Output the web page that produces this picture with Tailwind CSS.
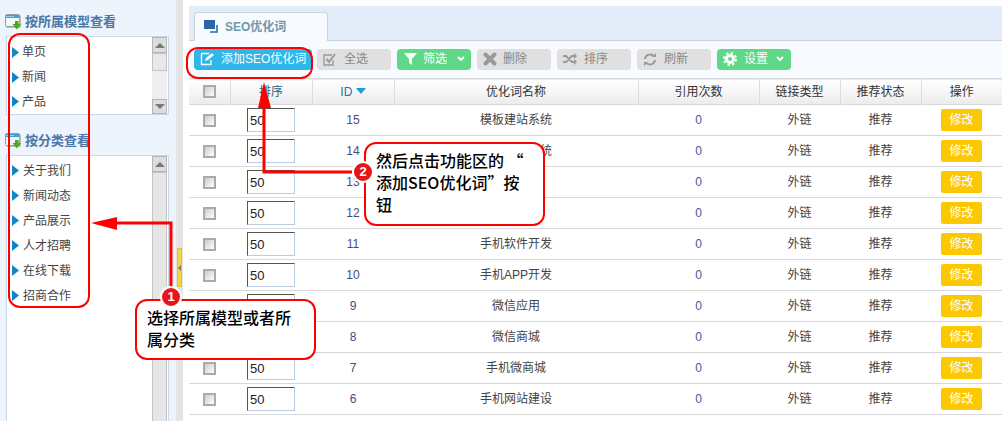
<!DOCTYPE html>
<html lang="zh-CN">
<head>
    <meta charset="UTF-8">
    <title>SEO优化词</title>
    <script src="https://cdn.jsdelivr.net/npm/@tailwindcss/browser@4"></script>
</head>
<body class="relative w-[1008px] h-[421px] overflow-hidden bg-white text-[12px] text-[#444] font-['Liberation_Sans','Noto_Sans_CJK_SC',sans-serif]">
    <svg width="0" height="0" class="absolute">
        <symbol id="tri" viewBox="0 0 7 11"><path d="M0 0 L7 5.5 L0 11 Z" fill="#0f85c6"/></symbol>
        <symbol id="winIcon" viewBox="0 0 16 16">
            <rect x="1.500" y="1.500" width="14" height="12" fill="#888"/>
            <rect x="0.500" y="0.500" width="14" height="12" rx="1" fill="#f4f8fb" stroke="#8aa0ac"/>
            <rect x="1" y="1" width="13" height="3" fill="#3f9fd6"/>
            <path d="M1.500 2.500h8" stroke="#fff" stroke-width="1" stroke-dasharray="1 1"/>
            <path d="M10 7h3.500v3H16l-4.200 5.500L7.500 10H10z" fill="#4aae12"/>
        </symbol>
    </svg>

    <div class="flex h-full">
        <!-- left tree -->
        <div class="w-[176px] h-full shrink-0 bg-[#eef4fc] pt-[1px]">
            <div class="flex items-center gap-[4px] h-[35px] pl-[5px] pt-[6px] font-bold text-[13px] text-[#4a76a8]">
                <svg class="w-[16px] h-[16px]"><use href="#winIcon"/></svg>
                <span>按所属模型查看</span>
            </div>
            <div class="relative ml-[6px] w-[163px] h-[79px] bg-white border border-[#c9d8e8] flex flex-col pl-[5px] pt-[3px]">
                <div class="flex items-center gap-[3px] h-[25px]"><svg class="w-[7px] h-[11px]"><use href="#tri"/></svg>单页</div>
                <div class="flex items-center gap-[3px] h-[25px]"><svg class="w-[7px] h-[11px]"><use href="#tri"/></svg>新闻</div>
                <div class="flex items-center gap-[3px] h-[25px]"><svg class="w-[7px] h-[11px]"><use href="#tri"/></svg>产品</div>
                <div class="absolute right-[1px] top-0 bottom-0 w-[15px] bg-[#eeeeee] flex flex-col">
                    <div class="h-[16px] bg-[#ddd] border border-[#b5b5b5] flex items-center justify-center"><div class="border-x-[5px] border-x-transparent border-b-[5px] border-b-[#777]"></div></div>
                    <div class="h-[18px] bg-[#e8e8e8] border border-[#c4c4c4]"></div>
                    <div class="flex-1"></div>
                    <div class="h-[15px] bg-[#ddd] border border-[#b5b5b5] flex items-center justify-center"><div class="border-x-[5px] border-x-transparent border-t-[5px] border-t-[#777]"></div></div>
                </div>
            </div>
            <div class="flex items-center gap-[4px] h-[40px] pl-[5px] pt-[11px] font-bold text-[13px] text-[#4a76a8]">
                <svg class="w-[16px] h-[16px]"><use href="#winIcon"/></svg>
                <span>按分类查看</span>
            </div>
            <div class="relative ml-[6px] w-[163px] h-[270px] bg-white border border-[#c9d8e8] flex flex-col pl-[5px] pt-[2px]">
                <div class="flex items-center gap-[4px] h-[25px]"><svg class="w-[7px] h-[11px]"><use href="#tri"/></svg>关于我们</div>
                <div class="flex items-center gap-[4px] h-[25px]"><svg class="w-[7px] h-[11px]"><use href="#tri"/></svg>新闻动态</div>
                <div class="flex items-center gap-[4px] h-[25px]"><svg class="w-[7px] h-[11px]"><use href="#tri"/></svg>产品展示</div>
                <div class="flex items-center gap-[4px] h-[25px]"><svg class="w-[7px] h-[11px]"><use href="#tri"/></svg>人才招聘</div>
                <div class="flex items-center gap-[4px] h-[25px]"><svg class="w-[7px] h-[11px]"><use href="#tri"/></svg>在线下载</div>
                <div class="flex items-center gap-[4px] h-[25px]"><svg class="w-[7px] h-[11px]"><use href="#tri"/></svg>招商合作</div>
                <div class="absolute right-[1px] top-0 bottom-0 w-[15px] bg-[#eeeeee] flex flex-col">
                    <div class="h-[16px] bg-[#ddd] border border-[#b5b5b5] flex items-center justify-center"><div class="border-x-[5px] border-x-transparent border-b-[5px] border-b-[#777]"></div></div>
                    <div class="flex-1 bg-[#e6e6e6] border border-[#c4c4c4]"></div>
                </div>
            </div>
        </div>

        <!-- splitter -->
        <div class="w-[7px] h-full shrink-0 bg-[#e4e4e4] flex flex-col items-center pt-[248px]">
            <div class="w-[5px] h-[39px] bg-[#f5d63d] border border-[#d8c34a] flex items-center justify-center">
                <div class="border-y-[3px] border-y-transparent border-r-[3px] border-r-[#777]"></div>
            </div>
        </div>

        <!-- main -->
        <div class="w-[813px] ml-[6px] pt-[6px] shrink-0">
            <div class="h-[35px] bg-[#e2ecf9] border-b border-[#c8d3de] pl-[5px] pt-[6px]">
                <div class="w-[134px] h-[29px] bg-[#f7fbff] border border-b-0 border-[#c8d3de] rounded-t-[4px] flex items-center gap-[6px] pl-[9px] font-bold text-[12px] text-[#6f97ac]">
                    <svg width="15" height="14" viewBox="0 0 15 14"><rect x="0" y="0" width="11" height="9" fill="#2b65a8"/><path d="M13 5v7H6" fill="none" stroke="#2b65a8" stroke-width="1.500"/></svg>
                    SEO优化词
                </div>
            </div>
            <div class="h-[37px] bg-[#f7fbff] flex items-center pl-[5px] pb-[1px] whitespace-nowrap">
                <div class="w-[118px] h-[21px] rounded-[4px] bg-[#2fb6ea] text-white flex items-center gap-[6px] pl-[6px]">
                    <svg width="15" height="14" viewBox="0 0 15 14" fill="none" stroke="#fff" stroke-width="1.300"><path d="M9 1.500H1.500v11H11V8"/><path d="M5 9l1-3 6-5 2 2-6 5z" fill="#fff" stroke="none"/></svg>添加SEO优化词
                </div>
                <div class="ml-[5px] w-[74px] h-[21px] rounded-[4px] bg-[#e0e0e0] text-[#888] flex items-center gap-[7px] pl-[6px]">
                    <svg width="14" height="13" viewBox="0 0 14 13" fill="none" stroke="#999" stroke-width="1.300"><path d="M9 2H1v10h9V7"/><path d="M3.500 6l2.500 3 6-8" stroke-width="2"/></svg>全选
                </div>
                <div class="ml-[6px] w-[74px] h-[21px] rounded-[4px] bg-[#5fd887] text-white flex items-center gap-[6px] pl-[7px]">
                    <svg width="13" height="12" viewBox="0 0 13 12" fill="#fff"><path d="M0 0h13L8 6v6L5 10V6z"/></svg>筛选
                    <svg width="8" height="6" viewBox="0 0 8 6" fill="none" stroke="#fff" stroke-width="1.800" class="ml-[4px]"><path d="M1 1l3 3 3-3"/></svg>
                </div>
                <div class="ml-[6px] w-[74px] h-[21px] rounded-[4px] bg-[#e0e0e0] text-[#888] flex items-center gap-[6px] pl-[6px]">
                    <svg width="14" height="14" viewBox="0 0 14 14" fill="none" stroke="#999" stroke-width="4" stroke-linecap="round"><path d="M2.500 2.500l9 9M11.500 2.500l-9 9"/></svg>删除
                </div>
                <div class="ml-[6px] w-[74px] h-[21px] rounded-[4px] bg-[#e0e0e0] text-[#888] flex items-center gap-[7px] pl-[6px]">
                    <svg width="14" height="12" viewBox="0 0 14 12" fill="none" stroke="#999" stroke-width="1.800"><path d="M0 3h3l6 6h3M0 9h3l6-6h3"/><path d="M11 0l3 3-3 3zM11 6l3 3-3 3z" fill="#999" stroke="none"/></svg>排序
                </div>
                <div class="ml-[6px] w-[74px] h-[21px] rounded-[4px] bg-[#e0e0e0] text-[#888] flex items-center gap-[7px] pl-[6px]">
                    <svg width="14" height="13" viewBox="0 0 14 13" fill="none" stroke="#999" stroke-width="2"><path d="M2 6a5 5 0 0 1 9-2.500M12 7a5 5 0 0 1-9 2.500"/><path d="M9 4h4V0zM5 9H1v4z" fill="#999" stroke="none"/></svg>刷新
                </div>
                <div class="ml-[6px] w-[74px] h-[21px] rounded-[4px] bg-[#5fd887] text-white flex items-center gap-[7px] pl-[6px]">
                    <svg width="14" height="14" viewBox="0 0 14 14" fill="none" stroke="#fff"><circle cx="7" cy="7" r="3.500" stroke-width="3"/><circle cx="7" cy="7" r="6" stroke-width="2" stroke-dasharray="2.400 2.310"/></svg>设置
                    <svg width="8" height="6" viewBox="0 0 8 6" fill="none" stroke="#fff" stroke-width="1.800" class="ml-[1px]"><path d="M1 1l3 3 3-3"/></svg>
                </div>
            </div>
            <table class="w-[813px] table-fixed border-collapse text-center text-[12px]">
                <colgroup>
                    <col class="w-[41px]"><col class="w-[82px]"><col class="w-[82px]"><col class="w-[244px]"><col class="w-[121px]"><col class="w-[81px]"><col class="w-[81px]"><col class="w-[81px]">
                </colgroup>
                <thead>
                    <tr class="h-[26px] bg-gradient-to-b from-white to-[#ececec] border-y border-[#d8d8d8] text-[#333]">
                        <th class="font-normal border-r border-[#dcdcdc]"><span class="block mx-auto w-[13px] h-[13px] border-2 border-[#aaa] bg-gradient-to-br from-[#ccc] to-white"></span></th>
                        <th class="font-normal border-r border-[#dcdcdc] text-[#2d5d7b]">排序</th>
                        <th class="font-normal border-r border-[#dcdcdc] text-[#2e6da4]">ID <span class="inline-block align-middle mb-[3px] border-x-[5px] border-x-transparent border-t-[6px] border-t-[#1e9bd8]"></span></th>
                        <th class="font-normal border-r border-[#dcdcdc]">优化词名称</th>
                        <th class="font-normal border-r border-[#dcdcdc]">引用次数</th>
                        <th class="font-normal border-r border-[#dcdcdc]">链接类型</th>
                        <th class="font-normal border-r border-[#dcdcdc]">推荐状态</th>
                        <th class="font-normal">操作</th>
                    </tr>
                </thead>
                <tbody id="rows"></tbody>
            </table>
        </div>
    </div>

    <!-- annotations lying over the page -->
    <div class="absolute left-[8px] top-[33px] w-[82px] h-[275px] border-2 border-[#f00] rounded-[12px]"></div>
    <div class="absolute left-[186px] top-[47px] w-[127px] h-[32px] border-2 border-[#f00] rounded-[12px]"></div>
    <svg class="absolute left-0 top-0" width="1008" height="421" fill="none">
        <path d="M171 290V223H112" stroke="#f00" stroke-width="3"/>
        <path d="M91 223L117 217V230Z" fill="#f00"/>
        <path d="M363 172H264V105" stroke="#f00" stroke-width="3"/>
        <path d="M264 82L271 108H258Z" fill="#f00"/>
    </svg>
    <div class="absolute left-[135px] top-[299px] w-[181px] h-[61px] bg-white border-2 border-[#f00] rounded-[12px] pl-[10px] pt-[5px] text-[16px] leading-[22px] font-medium text-black font-['Noto_Sans_CJK_SC',sans-serif]">选择所属模型或者所<br>属分类</div>
    <div class="absolute left-[364px] top-[142px] w-[181px] h-[84px] bg-white border-2 border-[#f00] rounded-[12px] pl-[10px] pt-[5px] text-[16px] leading-[22px] font-medium text-black whitespace-nowrap font-['Noto_Sans_CJK_SC',sans-serif]">然后点击功能区的 “<br>添加SEO优化词”按<br>钮</div>
    <div class="absolute left-[160px] top-[286px] w-[22px] h-[22px] rounded-full bg-[#e8141c] border-2 border-white text-white text-[13px] font-bold leading-[18px] text-center">1</div>
    <div class="absolute left-[352px] top-[161px] w-[22px] h-[22px] rounded-full bg-[#e8141c] border-2 border-white text-white text-[13px] font-bold leading-[18px] text-center">2</div>

    <script>
        const words = [
            ['15', '模板建站系统'], ['14', '网站管理系统'], ['13', '网站建设'], ['12', '网站开发'],
            ['11', '手机软件开发'], ['10', '手机APP开发'], ['9', '微信应用'], ['8', '微信商城'],
            ['7', '手机微商城'], ['6', '手机网站建设']
        ];
        document.getElementById('rows').innerHTML = words.map(([id, name]) => `
            <tr class="h-[31px] border-b border-[#d8d8d8]">
                <td><span class="block mx-auto w-[13px] h-[13px] border-2 border-[#aaa] bg-gradient-to-br from-[#ccc] to-white"></span></td>
                <td><div class="ml-[17px] w-[48px] h-[24px] border border-[#b8cce4] border-t-[#555] border-l-[#555] text-left pl-[2px] leading-[23px] text-[13px] text-[#222]">50</div></td>
                <td class="text-[#4a4a80]">${id}</td>
                <td>${name}</td>
                <td class="text-[#3d5a99]">0</td>
                <td>外链</td>
                <td>推荐</td>
                <td><div class="mx-auto w-[41px] h-[22px] rounded-[2px] bg-[#fcc800] text-white leading-[22px]">修改</div></td>
            </tr>`).join('');
    </script>
</body>
</html>
